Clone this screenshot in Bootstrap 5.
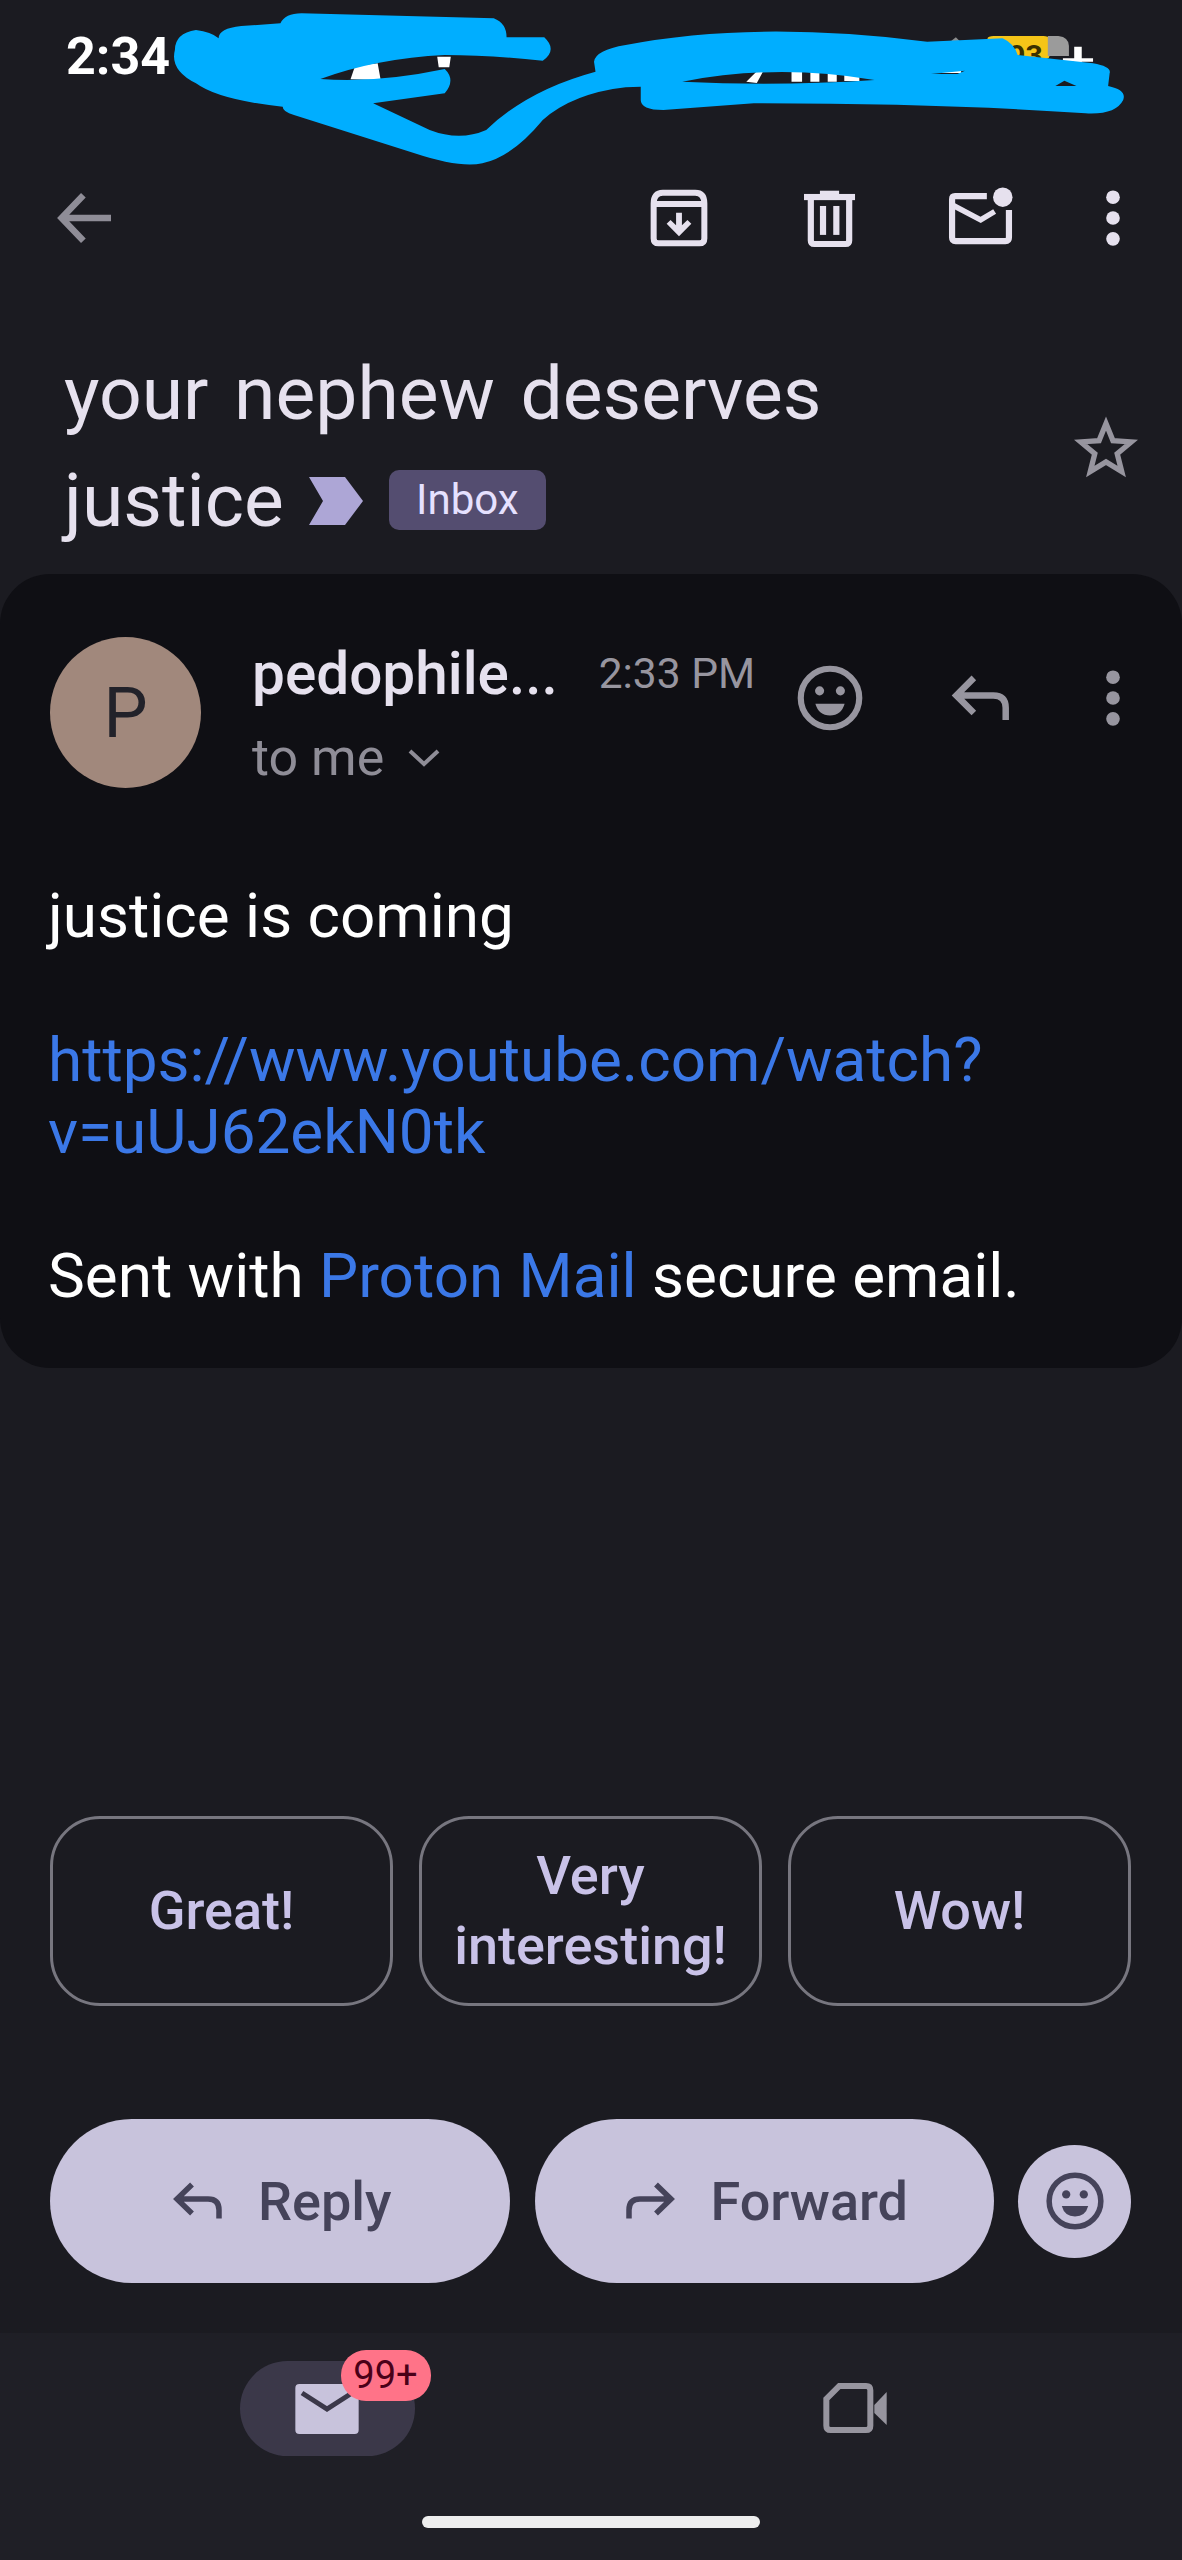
<!DOCTYPE html>
<html lang="en">
<head>
  <meta charset="UTF-8" />
  <meta name="viewport" content="width=device-width, initial-scale=1" />
  <title>Mail</title>
  <link href="https://cdn.jsdelivr.net/npm/bootstrap@5.3.3/dist/css/bootstrap.min.css" rel="stylesheet" />
  <style>
    html, body { margin: 0; background: #1b1b21; }
    .screen {
      width: 1182px; height: 2560px; overflow: hidden;
      background: #1b1b21; color: #e6e1ee;
      font-family: Roboto, "Liberation Sans", sans-serif;
    }
    .status-row { height: 170px; padding: 30px 0 0 66px; }
    .status-time { font-size: 52px; font-weight: 700; line-height: 54px; color: #fff; }
    .scribble { left: 0; top: 0; width: 1182px; height: 280px; }
    .tool-row { height: 96px; padding: 0 21px 0 37px; }
    .tool-slot { width: 96px; height: 96px; flex: none; }
    .tool-slot svg { width: 78px; height: 78px; }
    .gap-wide { margin-left: 55px; }
    .gap-narrow { margin-left: 36px; }
    .subject-row { margin-top: 74px; margin-bottom: 20px; padding: 0 44px 0 64px; }
    .subject-text { font-size: 75px; font-weight: 400; line-height: 107px; word-spacing: 7px; color: #e6e1ee; }
    .chevron-mark { width: 54px; height: 48px; margin-left: 25px; margin-right: 26px; }
    .inbox-tag {
      background: #544d70; color: #e6e1ff; font-size: 42px; font-weight: 400; margin-top: -2px;
      padding: 0; width: 157px; height: 60px; line-height: 60px; border-radius: 10px; word-spacing: 0;
    }
    .star-icon { width: 64px; height: 64px; }
    .message-card {
      background: #0f0f14; border: 0; border-radius: 50px; height: 794px;
      padding: 63px 0 0 0; color: #fff;
    }
    .sender-row { padding: 0 21px 0 50px; height: 151px; }
    .avatar-circle {
      width: 151px; height: 151px; flex: none; background: #a1887c; color: #22222a;
      font-size: 70px; line-height: 1;
    }
    .sender-col { width: 530px; margin-left: 51px; padding-top: 5px; }
    .sender-name { font-size: 58.500px; font-weight: 500; line-height: 64px; color: #e6e1ee; }
    .sender-time { font-size: 42.500px; line-height: 64px; color: #97959f; margin-left: 41px; }
    .sender-to { font-size: 52px; line-height: 64px; margin-top: 20px; color: #8f8d97; }
    .to-caret { width: 36px; height: 24px; margin-left: 22px; }
    .slots-top { margin-top: 13px; }
    .message-body { padding: 0 30px 0 48px; margin-top: 92px; font-size: 62px; line-height: 72px; }
    .message-body p { margin: 0 0 72px; }
    .message-body a { color: #3b78e7; text-decoration: none; word-break: break-all; }
    .chip-row { margin-top: auto; padding: 0 51px 0 50px; gap: 26px; }
    .chip-btn {
      width: 343px; height: 190px; padding: 0 10px; border: 3px solid #77767f; border-radius: 50px;
      background: transparent; color: #c9c2e8; font-size: 54px; font-weight: 500; line-height: 70px;
    }
    .action-row { margin-top: 113px; margin-bottom: 50px; padding: 0 51px 0 50px; gap: 25px; }
    .action-btn {
      width: 460px; height: 164px; border: 0; border-radius: 82px; background: #c8c3dc;
      color: #45435a; font-size: 54px; font-weight: 500; gap: 30px; padding: 0;
    }
    .action-btn svg { width: 60px; height: 60px; }
    .face-btn { width: 113px; height: 113px; flex: none; background: #c8c3dc; margin-left: -1px; }
    .face-btn svg { width: 66px; height: 66px; }
    .nav-bottom { height: 227px; background: #1f1f26; }
    .nav-items { height: 183px; padding: 28px 0 0 63px; }
    .nav-half { width: 528px; }
    .mail-pill { width: 175px; height: 95px; background: #3b3849; border-radius: 48px; }
    .mail-pill svg { width: 80px; height: 80px; }
    .count-tag {
      left: 101px; top: -11px; width: 90px; height: 51px; padding: 0; line-height: 51px;
      background: #ff7388; color: #4a0018; font-size: 38px; font-weight: 400; border-radius: 25px;
    }
    .video-icon { width: 80px; height: 80px; margin-top: 7px; }
    .home-bar { width: 338px; height: 12px; background: #eee; border-radius: 6px; margin: 0 auto; }
  </style>
</head>
<body>
  <div class="screen position-relative d-flex flex-column">

    <!-- status bar -->
    <div class="status-row"><span class="status-time">2:34</span></div>

    <!-- redaction scribble over the status icons -->
    <svg class="scribble position-absolute" viewBox="0 0 1568 840" preserveAspectRatio="none">
      <rect x="1310" y="108" width="82" height="70" rx="8" fill="#f5c518"/>
      <path d="M1390 108h14q14 4 14 30v30h-28z" fill="#9b9b9b"/>
      <text transform="scale(1.327,3)" x="1008" y="66" font-size="30" font-weight="700" font-family="Roboto, sans-serif" fill="#3a3000">93</text>
      <path d="M1258 130 1268 112 1276 130z" fill="#8d8d8d"/>
      <path d="M1410 180h40M1430 140v60" stroke="#fff" stroke-width="10"/>
      <path d="M465 238l6-40 30-8 4 50zM580 170h18l-2 32h-14zM990 245l18-40 6 2-10 42zM1050 205h14v40h-14zM1075 215h12v30h-12zM1098 215h12v30h-12zM1120 225h20v18h-20zM1235 205h40v14h-40z" fill="#fff"/>
      <path fill-rule="evenodd" fill="#00aeff"
        d="M232 150Q232 100 260 90Q280 95 290 115Q290 85 320 78L372 70Q378 40 400 40L655 55Q672 70 672 112L722 112Q740 150 720 182Q650 165 590 165Q500 175 425 237Q500 250 590 207Q605 240 590 280L495 310L570 390Q610 425 645 390Q700 270 790 215L788 185Q790 150 830 135Q1000 60 1230 125L1330 115Q1345 130 1350 165L1450 190Q1475 200 1472 220L1470 258Q1495 270 1490 300Q1480 345 1440 340Q1250 310 1000 310L880 330Q850 330 850 300L850 260L830 262Q760 280 720 360Q680 470 640 490Q610 505 550 460L390 345Q375 335 375 320Q290 300 260 250Q225 210 232 150Z
        M905 245Q1030 190 1160 240Q1030 260 905 245Z M1235 222 1280 212 1270 222Z M1400 258 1412 242 1428 258Z"/>
    </svg>

    <!-- toolbar -->
    <div class="tool-row d-flex align-items-center">
      <div class="tool-slot d-flex align-items-center justify-content-center">
        <svg viewBox="0 0 24 24" fill="none" stroke="#8f8d97" stroke-width="2"><path d="M20 12H5M11.500 5 4.800 12l6.700 7"/></svg>
      </div>
      <div class="ms-auto tool-slot d-flex align-items-center justify-content-center">
        <svg viewBox="0 0 24 24" fill="none" stroke="#e6e1ee" stroke-width="1.850"><path d="M4.200 7.500Q4.200 4.200 7 4.200H17Q19.800 4.200 19.800 7.500V18.300Q19.800 19.800 18.300 19.800H5.700Q4.200 19.800 4.200 18.300ZM4.200 7.700H19.800"/><path d="M12 17.600 8.200 13.800 9.400 12.600 11.100 14.200V10.400H12.900V14.200L14.600 12.600 15.800 13.800Z" fill="#e6e1ee" stroke="none"/></svg>
      </div>
      <div class="gap-wide tool-slot d-flex align-items-center justify-content-center">
        <svg viewBox="0 0 24 24" fill="#e6e1ee"><rect x="4" y="4.600" width="15.700" height="1.900"/><rect x="8.900" y="3.600" width="5.900" height="1.200"/><rect x="8.900" y="8.300" width="1.900" height="8.900"/><rect x="13" y="8.300" width="1.900" height="8.900"/><path d="M6.100 6V18.900Q6.100 20 7.200 20H16.800Q17.900 20 17.900 18.900V6" fill="none" stroke="#e6e1ee" stroke-width="1.900"/></svg>
      </div>
      <div class="gap-wide tool-slot d-flex align-items-center justify-content-center">
        <svg viewBox="0 0 24 24" fill="none" stroke="#e6e1ee" stroke-width="1.900"><path d="M13.800 5.250H4Q3.100 5.250 3.100 6.200V18Q3.100 19.100 4.200 19.100H19.500Q20.600 19.100 20.600 18V9.500"/><path d="M3.200 8 11.900 12.600 16.200 10" stroke-width="1.700"/><circle cx="18.700" cy="5.600" r="3" fill="#e6e1ee" stroke="none"/></svg>
      </div>
      <div class="gap-narrow tool-slot d-flex align-items-center justify-content-center">
        <svg viewBox="0 0 24 24" fill="#e6e1ee"><circle cx="12" cy="5.600" r="2.100"/><circle cx="12" cy="12" r="2.100"/><circle cx="12" cy="18.400" r="2.100"/></svg>
      </div>
    </div>

    <!-- subject -->
    <div class="subject-row d-flex align-items-center justify-content-between">
      <div class="subject-text">
        your nephew deserves<br />
        <span class="d-inline-flex align-items-center">justice
          <svg class="chevron-mark" viewBox="0 0 54 48"><path d="M0 0H36L54 24 36 48H0L14 24Z" fill="#ada6d6"/></svg>
          <span class="badge inbox-tag">Inbox</span>
        </span>
      </div>
      <svg class="star-icon" viewBox="0 0 24 24" fill="none" stroke="#97959f" stroke-width="2"><path d="M12 3.200 14.600 9.600 21.500 10.100 16.200 14.500 17.900 21.200 12 17.600 6.100 21.200 7.800 14.500 2.500 10.100 9.400 9.600Z"/></svg>
    </div>

    <!-- message -->
    <div class="card message-card">
      <div class="sender-row d-flex align-items-start">
        <div class="avatar-circle rounded-circle d-flex align-items-center justify-content-center">P</div>
        <div class="sender-col">
          <div class="d-flex align-items-center">
            <span class="sender-name">pedophile...</span>
            <span class="sender-time">2:33 PM</span>
          </div>
          <div class="sender-to d-flex align-items-center">to me
            <svg class="to-caret" viewBox="0 0 36 24" fill="none" stroke="#8f8d97" stroke-width="4"><path d="M4 5 18 18 32 5"/></svg>
          </div>
        </div>
        <div class="tool-slot slots-top d-flex align-items-center justify-content-center">
          <svg viewBox="0 0 24 24" fill="none" stroke="#97959f" stroke-width="1.900"><circle cx="12" cy="12" r="9"/><circle cx="8.800" cy="9.800" r="1.400" fill="#97959f" stroke="none"/><circle cx="15.200" cy="9.800" r="1.400" fill="#97959f" stroke="none"/><path d="M7.500 13.800h9q-1 3.600-4.500 3.600t-4.500-3.600Z" fill="#97959f" stroke="none"/></svg>
        </div>
        <div class="gap-wide tool-slot slots-top d-flex align-items-center justify-content-center">
          <svg viewBox="0 0 24 24" fill="none" stroke="#97959f" stroke-width="2"><path d="M9.800 5.800 4.400 11.200l5.400 5.400M4.800 11.200h11q3.800 0 3.800 3.800v3.800"/></svg>
        </div>
        <div class="gap-narrow tool-slot slots-top d-flex align-items-center justify-content-center">
          <svg viewBox="0 0 24 24" fill="#97959f"><circle cx="12" cy="5.600" r="2.100"/><circle cx="12" cy="12" r="2.100"/><circle cx="12" cy="18.400" r="2.100"/></svg>
        </div>
      </div>
      <div class="message-body">
        <p>justice is coming</p>
        <p><a href="#">https://www.youtube.com/watch?<br />v=uUJ62ekN0tk</a></p>
        <p>Sent with <a href="#">Proton Mail</a> secure email.</p>
      </div>
    </div>

    <!-- smart replies -->
    <div class="chip-row d-flex">
      <button type="button" class="btn chip-btn">Great!</button>
      <button type="button" class="btn chip-btn">Very interesting!</button>
      <button type="button" class="btn chip-btn">Wow!</button>
    </div>

    <!-- reply / forward -->
    <div class="action-row d-flex align-items-center">
      <button type="button" class="btn action-btn d-flex align-items-center justify-content-center">
        <svg viewBox="0 0 24 24" fill="none" stroke="#45435a" stroke-width="2.200"><path d="M9.600 5.400 3.600 11.200l6 5.800M4 11.200h12q4.400 0 4.400 4.400V19"/></svg>Reply
      </button>
      <button type="button" class="btn action-btn d-flex align-items-center justify-content-center">
        <svg viewBox="0 0 24 24" fill="none" stroke="#45435a" stroke-width="2.200"><path d="M14.400 5.400 20.400 11.200l-6 5.800M20 11.200H8q-4.400 0-4.400 4.400V19"/></svg>Forward
      </button>
      <div class="face-btn rounded-circle d-flex align-items-center justify-content-center">
        <svg viewBox="0 0 24 24" fill="none" stroke="#45435a" stroke-width="2"><circle cx="12" cy="12" r="9.400"/><circle cx="8.800" cy="9.600" r="1.500" fill="#45435a" stroke="none"/><circle cx="15.200" cy="9.600" r="1.500" fill="#45435a" stroke="none"/><path d="M7.200 13.800h9.600q-1 3.800-4.800 3.800t-4.800-3.800Z" fill="#45435a" stroke="none"/></svg>
      </div>
    </div>

    <!-- bottom nav -->
    <div class="nav-bottom">
      <div class="nav-items d-flex">
        <div class="nav-half d-flex justify-content-center">
          <div class="mail-pill position-relative d-flex align-items-center justify-content-center">
            <svg viewBox="0 0 24 24"><rect x="2.500" y="4.500" width="19" height="15" rx="1.200" fill="#c8c3dc"/><path d="M4.500 7.200 12 12l7.500-4.800" fill="none" stroke="#3b3849" stroke-width="1.500"/></svg>
            <span class="badge count-tag position-absolute">99+</span>
          </div>
        </div>
        <div class="nav-half d-flex justify-content-center">
          <svg class="video-icon" viewBox="0 0 24 24" fill="none" stroke="#97959f" stroke-width="1.800"><path d="M7.300 5.400H15.300Q16.600 5.400 16.600 6.700V17.300Q16.600 18.600 15.300 18.600H4.700Q3.400 18.600 3.400 17.300V9.300Z"/><path d="M17.800 11.100 21.500 7.200V17.100L17.800 13.500Z" fill="#97959f" stroke="none"/></svg>
        </div>
      </div>
      <div class="home-bar"></div>
    </div>
  </div>
  <script src="https://cdn.jsdelivr.net/npm/bootstrap@5.3.3/dist/js/bootstrap.bundle.min.js"></script>
</body>
</html>
